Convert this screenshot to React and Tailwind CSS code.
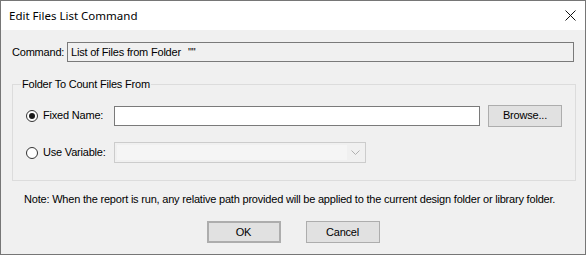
const font = { fontFamily: '"Liberation Sans", Arial, sans-serif', letterSpacing: "-0.2px" };

const Radio = ({ checked, label }) => (
  <div className="flex items-center w-[88px] shrink-0 whitespace-nowrap">
    <span className="w-[12px] h-[12px] rounded-full border border-[#333333] bg-white flex items-center justify-center">
      {checked && <span className="w-[6px] h-[6px] rounded-full bg-[#1a1a1a]" />}
    </span>
    <span className="ml-[5px] text-[11px] leading-[13px] text-black">{label}</span>
  </div>
);

const Button = ({ children, primary }) => (
  <button
    className={`w-[74px] h-[22px] text-[11px] leading-[13px] text-black bg-[#e1e1e1] flex items-center justify-center ${
      primary ? "border-2 border-[#adadad]" : "border border-[#adadad]"
    }`}
  >
    {children}
  </button>
);

export default function App() {
  return (
    <div
      className="w-[586px] h-[255px] border border-[#767676] bg-[#f0f0f0] flex flex-col text-black"
      style={font}
    >
      {/* Title bar */}
      <div className="h-[29px] bg-white flex items-center justify-between pl-[8px] pr-[9px] shrink-0">
        <span
          className="text-[11.5px] leading-[14px] tracking-normal text-black whitespace-nowrap"
          style={{ fontFamily: '"Noto Sans", "Liberation Sans", sans-serif' }}
        >
          Edit Files List Command
        </span>
        <svg width="11" height="11" viewBox="0 0 11 11">
          <path d="M0.5 0.5 L10.5 10.5 M10.5 0.5 L0.5 10.5" stroke="#111" strokeWidth="1" />
        </svg>
      </div>

      {/* Body */}
      <div className="flex-1 flex flex-col pl-[11px] pr-[9px] pt-[12px]">
        <div className="flex items-center h-[20px] pr-[2px]">
          <span className="w-[55px] shrink-0 text-[11px] leading-[13px] whitespace-nowrap">Command:</span>
          <div className="flex-1 h-[20px] border border-[#7a7a7a] bg-[#f0f0f0] flex items-center pl-[3px] text-[11px] leading-[13px] whitespace-nowrap">
            <span>List of Files from Folder</span>
            <span className="ml-[7px]">&quot;&quot;</span>
          </div>
        </div>

        <div className="relative mt-[22px] h-[97px] shrink-0 border border-[#dcdcdc] pl-[13px] pt-[20px] pr-[13px] flex flex-col gap-[16px]">
          <span className="absolute left-[8px] top-[-7px] px-[1px] bg-[#f0f0f0] text-[11px] leading-[13px] whitespace-nowrap">
            Folder To Count Files From
          </span>
          <div className="flex items-center h-[21px]">
            <Radio checked label="Fixed Name:" />
            <div className="w-[366px] h-[20px] border border-[#7a7a7a] bg-white" />
            <div className="ml-[8px]">
              <Button>Browse...</Button>
            </div>
          </div>
          <div className="flex items-center h-[21px]">
            <Radio label="Use Variable:" />
            <div className="w-[252px] h-[21px] border border-[#cccccc] bg-[#f0f0f0] flex items-center p-[2px]">
              <div className="w-[230px] h-[15px] bg-[#f5f5f5]" />
              <div className="flex-1 flex items-center justify-center">
                <svg width="9" height="5" viewBox="0 0 9 5">
                  <path d="M0.5 0.5 L4.5 4.5 L8.5 0.5" fill="none" stroke="#b0b0b0" strokeWidth="1" />
                </svg>
              </div>
            </div>
          </div>
        </div>

        <p className="mt-[12px] pl-[12px] text-[11px] leading-[13px] whitespace-nowrap">
          Note: When the report is run, any relative path provided will be applied to the current design folder or library folder.
        </p>

        <div className="mt-[15px] flex justify-center gap-[25px] pr-[2px]">
          <Button primary>OK</Button>
          <Button>Cancel</Button>
        </div>
      </div>
    </div>
  );
}
